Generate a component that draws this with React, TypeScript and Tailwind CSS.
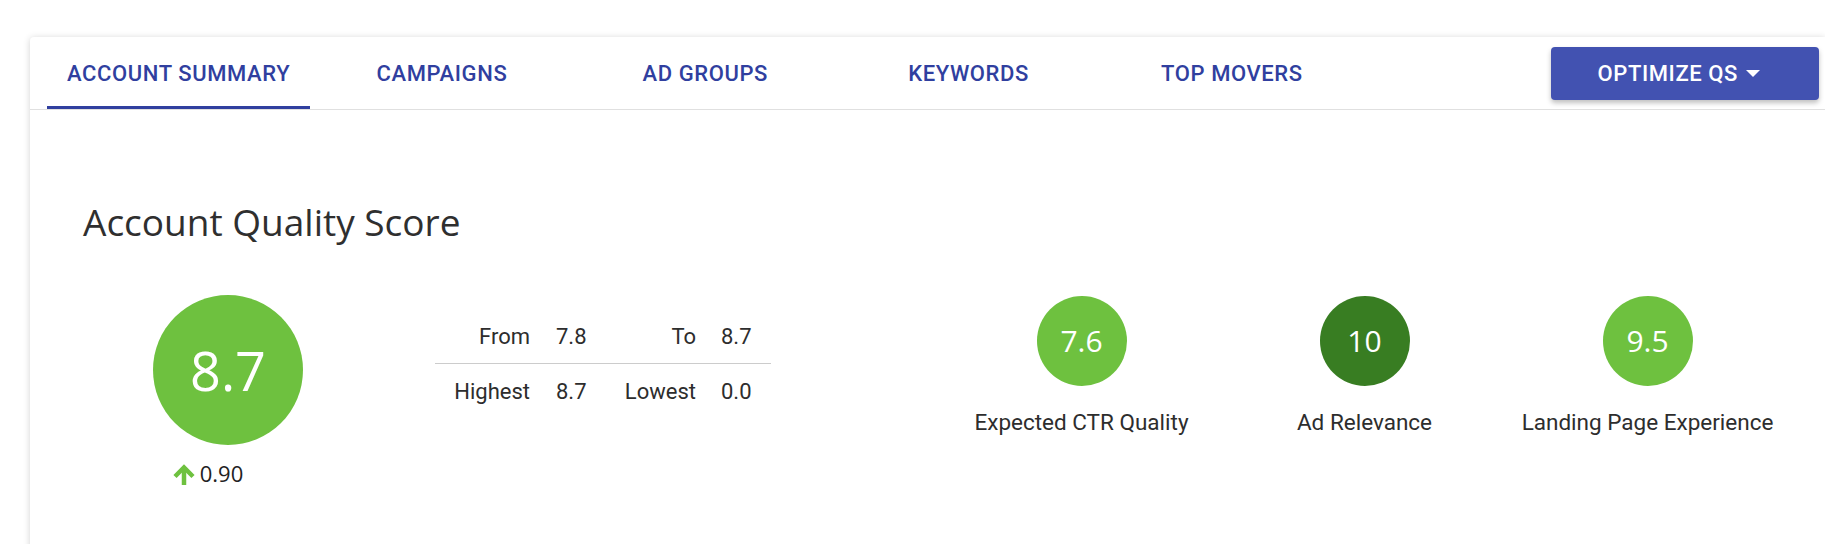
import React from "react";

const tabs = ["Account Summary", "Campaigns", "Ad Groups", "Keywords", "Top Movers"];

function ScoreCircle({ value, label, dark }: { value: string; label: string; dark?: boolean }) {
  return (
    <div className="flex flex-col items-center">
      <div
        className={
          "w-[90px] h-[90px] rounded-full flex items-center justify-center text-white text-[30px] leading-none font-['Open_Sans',sans-serif] " +
          (dark ? "bg-[#387d22]" : "bg-[#6ec13f]")
        }
      >
        {value}
      </div>
      <div className="mt-[21px] text-[22.5px] leading-[30px] text-[#2d2d2d] font-['Roboto',sans-serif] whitespace-nowrap">
        {label}
      </div>
    </div>
  );
}

export default function App() {
  return (
    <div className="w-full h-[544px] overflow-hidden bg-white pt-[37px] pl-[30px]">
      <div className="bg-white rounded-tl-[4px] shadow-[0_1px_7px_rgba(0,0,0,0.18)] h-[600px]">
        <div className="flex items-center h-[73px] border-b border-[#e0e0e0] pl-[17px]">
          {tabs.map((t, i) => (
            <div
              key={t}
              className="relative w-[263.3px] h-[72px] flex items-center justify-center uppercase text-[22px] font-medium tracking-[0.6px] text-[#303f9f] font-['Roboto',sans-serif]"
            >
              {t}
              {i === 0 && <div className="absolute left-0 right-0 bottom-0 h-[3px] bg-[#303f9f]" />}
            </div>
          ))}
          <button className="ml-[188px] w-[268px] h-[53px] rounded-[4px] bg-[#4252b1] text-white flex items-center pl-[46px] shadow-[0_3px_5px_rgba(0,0,0,0.25)] font-['Roboto',sans-serif] text-[22px] font-medium tracking-[0.6px] uppercase">
            <span>Optimize QS</span>
            <svg width="14" height="7" viewBox="0 0 14 7" className="ml-[8px]">
              <path d="M0 0 L14 0 L7 7 Z" fill="white" />
            </svg>
          </button>
        </div>

        <div className="pl-[53px] pt-[88px]">
          <h1 className="text-[37px] leading-[48px] text-[#2f2f2f] font-['Open_Sans',sans-serif] font-normal">
            Account Quality Score
          </h1>

          <div className="flex items-start mt-[49px]">
            <div className="w-[290px] flex flex-col items-center">
              <div className="w-[150px] h-[150px] rounded-full bg-[#6ec13f] flex items-center justify-center text-white text-[54px] leading-none font-['Open_Sans',sans-serif]">
                8.7
              </div>
              <div className="mt-[13px] mr-[40px] flex items-center h-[30px]">
                <svg width="22" height="22" viewBox="0 0 22 22" className="mt-[3px]">
                  <path d="M11 21 L11 4" stroke="#6ec13f" strokeWidth="4.5" fill="none" />
                  <path d="M2 12.5 L11 3.5 L20 12.5" stroke="#6ec13f" strokeWidth="4.5" fill="none" strokeLinejoin="miter" />
                </svg>
                <span className="ml-[5px] text-[22px] leading-[30px] text-[#222] font-['Open_Sans',sans-serif]">0.90</span>
              </div>
            </div>

            <div className="ml-[62px] mt-[14px] w-[336px] font-['Roboto',sans-serif] text-[22px] text-[#2d2d2d]">
              <div className="grid grid-cols-[95px_70px_96px_75px] h-[55px] items-center border-b border-[#cccccc]">
                <div className="text-right">From</div>
                <div className="pl-[26px]">7.8</div>
                <div className="text-right">To</div>
                <div className="pl-[25px]">8.7</div>
              </div>
              <div className="grid grid-cols-[95px_70px_96px_75px] h-[55px] items-center">
                <div className="text-right">Highest</div>
                <div className="pl-[26px]">8.7</div>
                <div className="text-right">Lowest</div>
                <div className="pl-[25px]">0.0</div>
              </div>
            </div>

            <div className="ml-[169px] mt-[1px] grid grid-cols-[283px_283px_283px]">
              <ScoreCircle value="7.6" label="Expected CTR Quality" />
              <ScoreCircle value="10" label="Ad Relevance" dark />
              <ScoreCircle value="9.5" label="Landing Page Experience" />
            </div>
          </div>
        </div>
      </div>
    </div>
  );
}
